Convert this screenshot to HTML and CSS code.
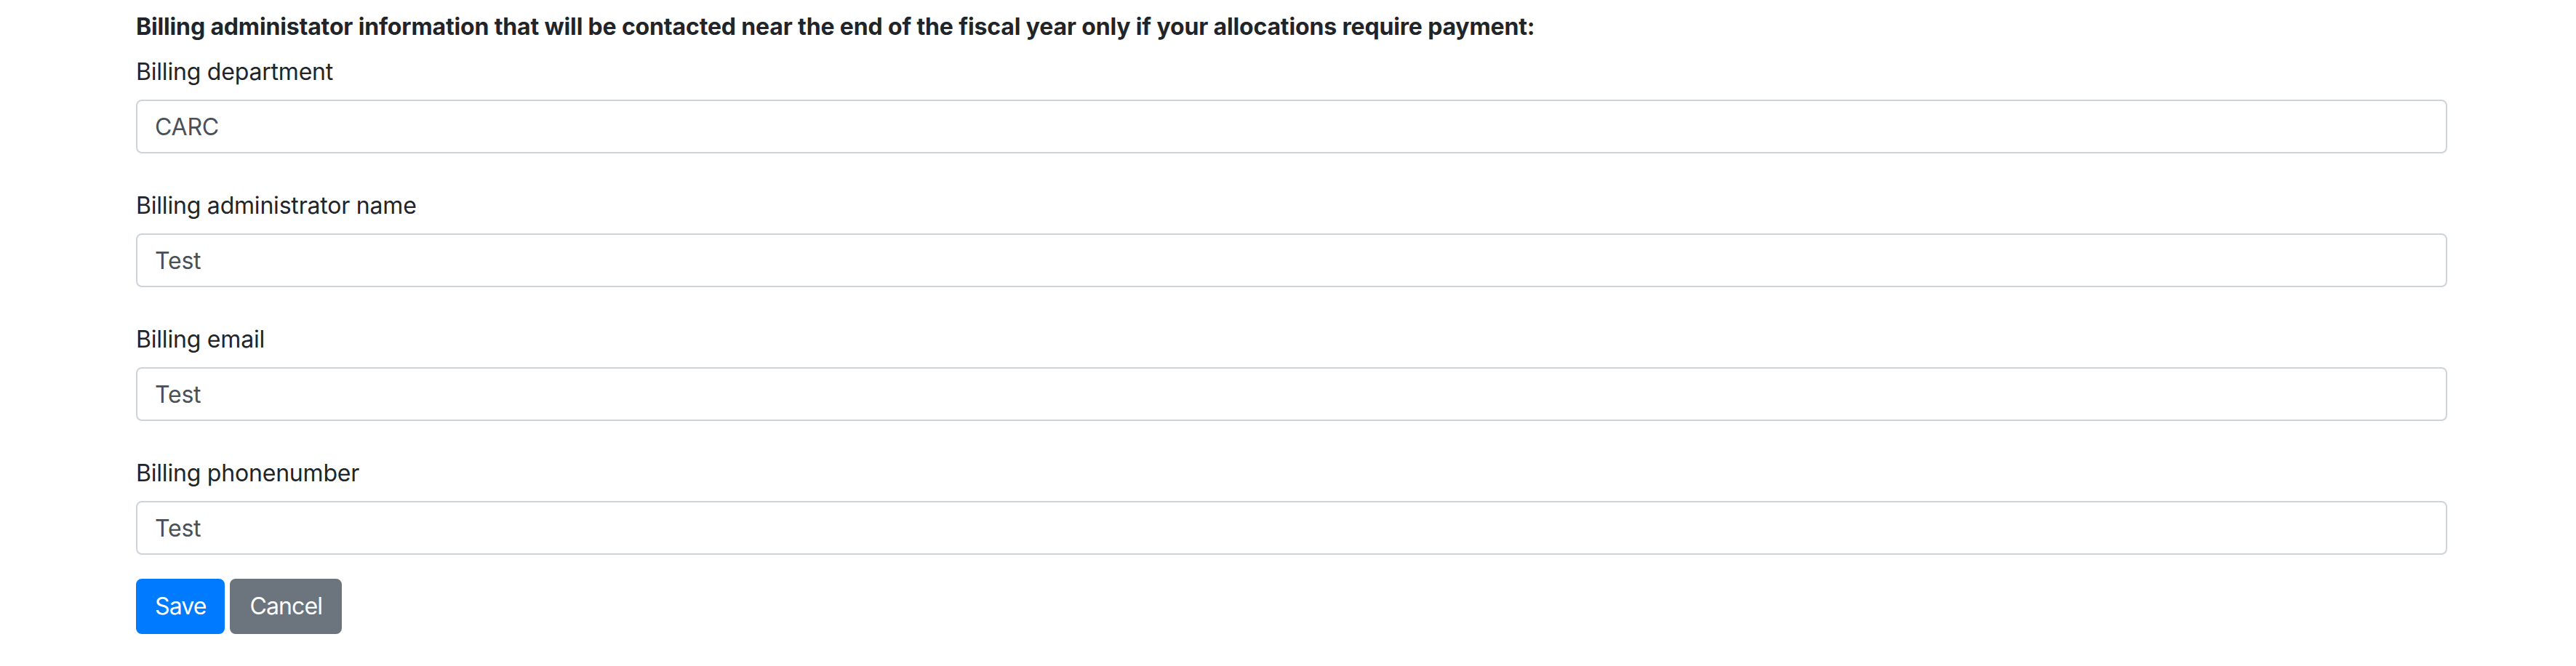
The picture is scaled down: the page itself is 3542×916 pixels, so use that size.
FILE: index.html
```html
<!DOCTYPE html>
<html lang="en">
<head>
<meta charset="utf-8">
<title>Billing administrator</title>
<link rel="stylesheet" href="styles.css">
</head>
<body>
<main class="page">
  <form class="billing-form">
    <p class="intro">Billing administator information that will be contacted near the end of the fiscal year only if your allocations require payment:</p>
    <div class="form-group">
      <label class="form-label" for="dept">Billing department</label>
      <input class="form-control" id="dept" type="text" value="CARC">
    </div>
    <div class="form-group">
      <label class="form-label" for="name">Billing administrator name</label>
      <input class="form-control" id="name" type="text" value="Test">
    </div>
    <div class="form-group">
      <label class="form-label" for="email">Billing email</label>
      <input class="form-control" id="email" type="text" value="Test">
    </div>
    <div class="form-group last">
      <label class="form-label" for="phone">Billing phonenumber</label>
      <input class="form-control" id="phone" type="text" value="Test">
    </div>
    <div class="actions">
      <button type="button" class="btn btn-primary">Save</button>
      <button type="button" class="btn btn-secondary">Cancel</button>
    </div>
  </form>
</main>
</body>
</html>
```

FILE: styles.css
```css
html, body {
  margin: 0;
  padding: 0;
  background: #ffffff;
}

body {
  font-family: Inter, "Liberation Sans", Arial, sans-serif;
  font-size: 32px;
  line-height: 48px;
  letter-spacing: -0.2px;
  color: #212529;
}

.page {
  padding: 13px 177px 0 187px;
}

.billing-form {
  display: flex;
  flex-direction: column;
}

.intro {
  margin: 0 0 14px 0;
  font-weight: 700;
  font-size: 32px;
  line-height: 48px;
  letter-spacing: -0.15px;
}

.form-group {
  display: flex;
  flex-direction: column;
  margin-bottom: 48px;
}

.form-group.last {
  margin-bottom: 33px;
}

.form-label {
  display: block;
  margin-bottom: 14px;
}

.form-control {
  box-sizing: border-box;
  width: 100%;
  height: 74px;
  margin: 0;
  padding: 0 24px;
  border: 2px solid #ced4da;
  border-radius: 8px;
  font-family: inherit;
  font-size: 32px;
  line-height: 48px;
  letter-spacing: -0.2px;
  color: #495057;
  background: #ffffff;
  outline: none;
}

.actions {
  display: flex;
  gap: 7px;
}

.btn {
  box-sizing: border-box;
  height: 76px;
  padding: 12px 25px;
  border: 2px solid transparent;
  border-radius: 8px;
  font-family: inherit;
  font-size: 32px;
  line-height: 48px;
  letter-spacing: -0.9px;
  color: #ffffff;
  cursor: pointer;
}

.btn-primary {
  padding-left: 24px;
  padding-right: 24px;
  background: #007bff;
  border-color: #007bff;
}

.btn-secondary {
  background: #6c757d;
  border-color: #6c757d;
}
```
